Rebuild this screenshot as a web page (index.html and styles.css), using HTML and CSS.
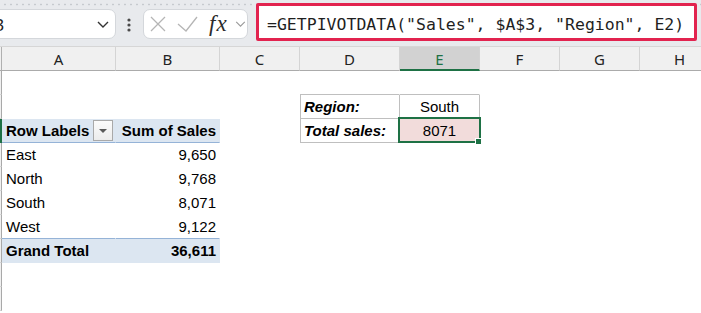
FILE: index.html
```html
<!DOCTYPE html>
<html lang="en">
<head>
  <meta charset="UTF-8" />
  <title>GETPIVOTDATA</title>
  <link rel="stylesheet" href="styles.css">
</head>
<body>
  <div class="toolbar">
    <div class="namebox">
      <span>E3</span>
      <svg class="chev" viewBox="0 0 12 7" fill="none" stroke="#333" stroke-width="1.4"><path d="M1 1l5 5 5-5"/></svg>
    </div>
    <svg class="grip" viewBox="0 0 4 14"><circle cx="2" cy="2" r="1.6"/><circle cx="2" cy="7" r="1.6"/><circle cx="2" cy="12" r="1.6"/></svg>
    <div class="fxbox">
      <svg class="marks" viewBox="0 0 48 16" fill="none" stroke="#b5b5b5" stroke-width="1.3">
        <path d="M1 1l14 14M15 1L1 15"/>
        <path d="M28 8l8 7L47 1"/>
      </svg>
      <span class="fx">fx</span>
      <svg class="chev small" viewBox="0 0 12 7" fill="none" stroke="#9a9a9a" stroke-width="1.3"><path d="M1 1l5 5 5-5"/></svg>
    </div>
    <div class="formula">=GETPIVOTDATA("Sales", $A$3, "Region", E2)</div>
  </div>

  <div class="colheads">
    <div class="ch corner"></div>
    <div class="ch">A</div>
    <div class="ch">B</div>
    <div class="ch">C</div>
    <div class="ch">D</div>
    <div class="ch current">E</div>
    <div class="ch">F</div>
    <div class="ch">G</div>
    <div class="ch">H</div>
  </div>

  <div class="sheet">
    <div class="row">
      <div class="rh"></div><div class="c"></div><div class="c"></div><div class="c"></div>
      <div class="c rg-top"></div><div class="c rg-top"></div>
    </div>
    <div class="row">
      <div class="rh"></div><div class="c"></div><div class="c"></div><div class="c"></div>
      <div class="c rg rg-first label">Region:</div><div class="c rg center">South</div>
    </div>
    <div class="row">
      <div class="rh active"></div>
      <div class="c pv-head filter">
        <span>Row Labels</span>
        <span class="dd"><svg viewBox="0 0 8 4"><path d="M0 0h8L4 4z"/></svg></span>
      </div>
      <div class="c pv-head num">Sum of Sales</div>
      <div class="c"></div>
      <div class="c rg rg-first label">Total sales:</div>
      <div class="c rg center sel">8071</div>
    </div>
    <div class="row">
      <div class="rh"></div><div class="c">East</div><div class="c num">9,650</div>
    </div>
    <div class="row">
      <div class="rh"></div><div class="c">North</div><div class="c num">9,768</div>
    </div>
    <div class="row">
      <div class="rh"></div><div class="c">South</div><div class="c num">8,071</div>
    </div>
    <div class="row">
      <div class="rh"></div><div class="c pv-last">West</div><div class="c pv-last num">9,122</div>
    </div>
    <div class="row">
      <div class="rh"></div><div class="c pv-total">Grand Total</div><div class="c pv-total num">36,611</div>
    </div>
    <div class="row"><div class="rh"></div></div>
    <div class="row"><div class="rh"></div></div>
  </div>
</body>
</html>
```

FILE: styles.css
```css
:root {
  --green: #1e7145;
  --pivot: #dce6f1;
  --pivot-line: #95b3d7;
  --cell-line: #bfbfbf;
  --head: #f0f0f0;
}
body {
  margin: 0;
  width: 701px;
  height: 313px;
  overflow: hidden;
  background: #fff;
  font-family: "Liberation Sans", Arial, sans-serif;
  color: #000;
}

/* formula bar */
.toolbar {
  box-sizing: border-box;
  height: 47px;
  padding-top: 9px;
  display: flex;
  align-items: flex-start;
  border-bottom: 1px solid #d6d6d6;
  background: radial-gradient(circle, #c6cace 0.8px, transparent 1.2px) 2px 3px / 6px 3px repeat-x, #e8eaed;
}
.namebox {
  box-sizing: border-box;
  flex: none;
  width: 142px;
  height: 30px;
  margin-left: -26px;
  padding: 0 6px 0 10px;
  display: flex;
  align-items: center;
  justify-content: space-between;
  background: #fff;
  border: 1px solid #d4d7db;
  border-radius: 7px;
  font-family: "Noto Sans", sans-serif;
  font-size: 17px;
  color: #222;
}
.chev {
  width: 12px;
  height: 7px;
}
.chev.small {
  width: 11px;
  height: 6px;
  margin-left: 6px;
}
.grip {
  flex: none;
  width: 4px;
  height: 14px;
  margin: 9px 12px 0 11px;
  fill: #4a4a4a;
}
.fxbox {
  box-sizing: border-box;
  flex: none;
  width: 105px;
  height: 30px;
  padding-left: 6px;
  display: flex;
  align-items: center;
  background: #fff;
  border: 1px solid #d4d7db;
  border-radius: 7px;
}
.marks {
  width: 48px;
  height: 16px;
}
.fx {
  width: 20px;
  margin-left: 11px;
  font-family: "Liberation Serif", serif;
  font-style: italic;
  font-size: 23px;
  letter-spacing: 1px;
  line-height: 24px;
  color: #2b2b2b;
}
.formula {
  box-sizing: border-box;
  flex: none;
  width: 441px;
  height: 38px;
  margin: -6px 0 0 8px;
  padding: 9px 0 0 8px;
  background: #fff;
  border: 3px solid #e2234f;
  border-radius: 2px;
  font-family: "DejaVu Sans Mono", monospace;
  font-size: 16.5px;
  line-height: 20px;
  white-space: nowrap;
  color: #1f1f1f;
}

/* grid */
.colheads,
.row {
  display: grid;
  grid-template-columns: 2px 114px 104px 80px 100px 80px 80px 80px 80px;
}
.ch {
  box-sizing: border-box;
  height: 24px;
  padding-top: 1px;
  background: var(--head);
  border-right: 1px solid #d4d4d4;
  border-bottom: 1px solid #ababab;
  text-align: center;
  font-family: "Noto Sans", sans-serif;
  font-size: 15px;
  line-height: 22px;
  color: #222;
}
.ch.corner {
  border-right-color: #b0b0b0;
}
.ch.current {
  background: #d2d2d2;
  border-bottom: 2px solid var(--green);
  color: var(--green);
}
.row {
  height: 24px;
}
.rh {
  box-sizing: border-box;
  background: var(--head);
  border-right: 1px solid #a9a9a9;
  border-bottom: 1px solid #d4d4d4;
}
.rh.active {
  background: var(--green);
  border-color: var(--green);
}
.c {
  box-sizing: border-box;
  padding: 0 4px;
  border-right: 1px solid transparent;
  border-bottom: 1px solid transparent;
  font-size: 15px;
  line-height: 23px;
  white-space: nowrap;
}
.num {
  text-align: right;
  padding-right: 3px;
}
.center {
  text-align: center;
}

/* pivot table */
.pv-head {
  background: var(--pivot);
  border-bottom-color: var(--pivot-line);
  font-weight: bold;
}
.pv-last {
  border-bottom-color: var(--pivot-line);
}
.pv-total {
  background: var(--pivot);
  font-weight: bold;
}
.filter {
  display: flex;
  align-items: center;
  justify-content: space-between;
  padding-right: 2px;
}
.dd {
  box-sizing: border-box;
  width: 20px;
  height: 21px;
  display: flex;
  align-items: center;
  justify-content: center;
  background: linear-gradient(#fbfbfb, #ececec);
  border: 1px solid #a9a9a9;
}
.dd svg {
  width: 8px;
  height: 4px;
  fill: #5a5a5a;
}

/* lookup block */
.rg-top {
  border-bottom-color: var(--cell-line);
}
.rg {
  border-right-color: var(--cell-line);
  border-bottom-color: var(--cell-line);
}
.rg-first {
  border-left: 1px solid var(--cell-line);
  padding-left: 3px;
}
.label {
  font-weight: bold;
  font-style: italic;
}
.sel {
  position: relative;
  background: #f2dcdb;
}
.sel::before {
  content: "";
  position: absolute;
  left: -2px;
  top: -2px;
  right: -2px;
  bottom: -1px;
  border: 2px solid var(--green);
  z-index: 1;
}
.sel::after {
  content: "";
  position: absolute;
  right: -3px;
  bottom: -3px;
  width: 5px;
  height: 5px;
  background: var(--green);
  border: 1px solid #fff;
  z-index: 2;
}
```
